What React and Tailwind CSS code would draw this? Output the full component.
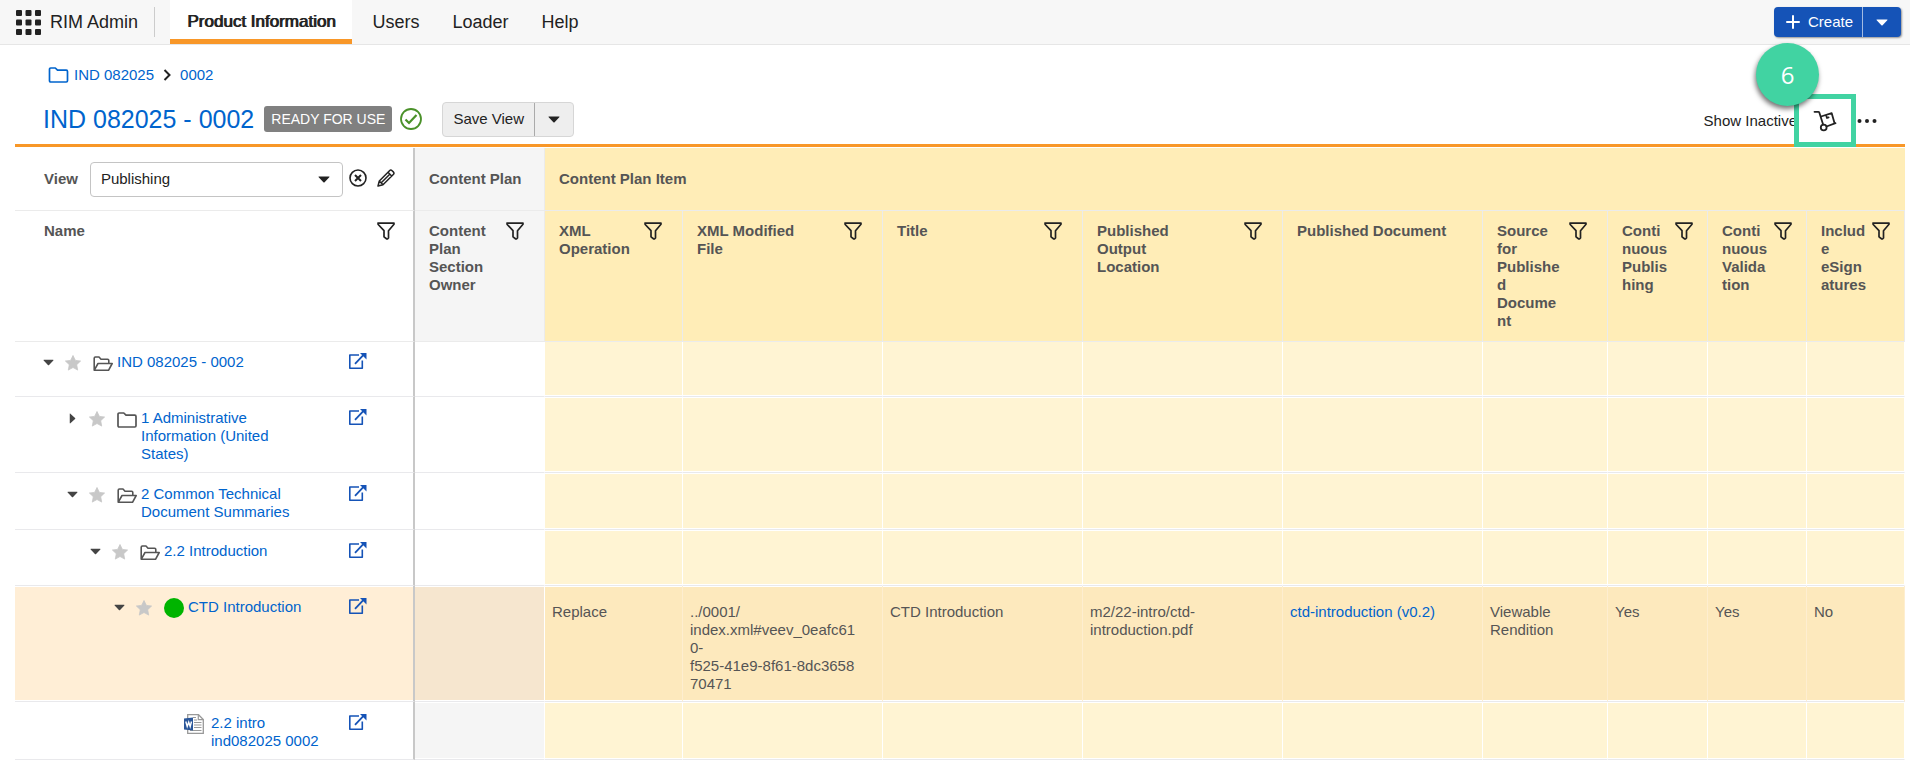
import React, { useState } from 'react';

const Caret = ({ className }) => (
  <svg viewBox="0 0 12 7" className={className} fill="currentColor" aria-hidden="true">
    <path d="M1 .5h10c.5 0 .6.4.3.7L6.6 6.3c-.4.4-.8.4-1.2 0L.7 1.200C.4.9.5.5 1 .5z" />
  </svg>
);

const Filter = () => (
  <svg viewBox="0 0 18 18" className="h-[18px] w-[18px]" fill="none" stroke="currentColor" strokeWidth="1.700" strokeLinejoin="round">
    <path d="M1 1.200h16v1l-5.500 6.500V16l-1 1h-.7L7 14.800V8.700L1.200 2.500z" />
  </svg>
);

const Star = () => (
  <svg viewBox="0 0 16 16" className="h-4 w-4" fill="#c8c8c8" stroke="#c8c8c8" strokeWidth=".8" strokeLinejoin="round">
    <path d="M8 .5l2.400 4.900 5.200.6-3.900 3.700 1 5.400L8 12.500l-4.700 2.600 1-5.400L.4 6l5.200-.6z" />
  </svg>
);

const FolderClosed = ({ className }) => (
  <svg viewBox="0 0 20 16" className={className} fill="none" stroke="currentColor" strokeWidth="1.700" strokeLinejoin="round">
    <path d="M1 13.800V2.200Q1 1 2.200 1h4.600L9 3.200h8.800q1.200 0 1.200 1.200v9.400q0 1.200-1.200 1.200H2.200Q1 15 1 13.800z" />
  </svg>
);

const FolderOpen = () => (
  <svg viewBox="0 0 20 16" className="h-4 w-5" fill="none" stroke="currentColor" strokeWidth="1.600" strokeLinejoin="round">
    <path d="M1.200 14V2.200Q1.200 1 2.400 1H6l2 2.200h6.600q1.200 0 1.200 1.200V7M1.200 14.300L5 7.500H19.200l-3.700 6.800H1.200z" />
  </svg>
);

const WordDoc = () => (
  <svg viewBox="0 0 20 20" className="h-5 w-5">
    <path d="M3.700.7h10.800l4.800 4.800v13.800H3.700z" fill="#fff" stroke="#999" strokeWidth="1.300" />
    <path d="M14.300.7v5h5" fill="none" stroke="#999" strokeWidth="1.200" />
    <path d="M10 8.500h7.500M10 11h7.500M10 13.500h7.500M6 16.500h11.500M9 3.500h3M10 6h3" stroke="#999" strokeWidth="1.200" />
    <path d="M0 4.500L9 3.500v13L0 15.500z" fill="#2b579a" />
    <path d="M1.800 7.500L3.200 12.500 4.700 8.200 6.200 12.500 7.500 7.500" fill="none" stroke="#fff" strokeWidth="1.400" />
  </svg>
);

const OpenExternal = () => (
  <svg viewBox="0 0 18 18" className="h-[18px] w-[18px]" fill="none" stroke="#1553b7" strokeWidth="1.600">
    <path d="M10 2H.8v13.300h12.500V7.500" strokeLinejoin="round" />
    <path d="M6 10.800l8.500-9" strokeWidth="1.800" />
    <path d="M11 0h6.500v6.500z" fill="#1553b7" stroke="none" />
  </svg>
);

const HandTruck = () => (
  <svg viewBox="0 0 24 22" className="h-[22px] w-6" fill="none" stroke="#222" strokeWidth="1.800" strokeLinecap="round" strokeLinejoin="round">
    <path d="M1.500 1.800h3.800q.8 0 1 .8l3.800 12M13.500 16.500l9-3.300" />
    <circle cx="10.700" cy="17.500" r="2.900" />
    <path d="M8 6.500l10.700-3.300 2.800 9.800M13 5l1 3 1.600-.6" />
  </svg>
);

const columns = [
  { label: 'XML Operation', filter: true },
  { label: 'XML Modified File', filter: true },
  { label: 'Title', filter: true },
  { label: 'Published Output Location', filter: true },
  { label: 'Published Document', filter: false },
  { label: 'Source for Published Document', filter: true },
  { label: 'Continuous Publishing', filter: true, tight: true },
  { label: 'Continuous Validation', filter: true, tight: true },
  { label: 'Include eSignatures', filter: true, tight: true },
];

const rows = [
  { name: 'IND 082025 - 0002', indent: 'pl-[28px]', arrow: 'down', icon: 'open', height: 'h-[55px]', first: true },
  { name: '1 Administrative Information (United States)', indent: 'pl-[52px]', arrow: 'right', icon: 'closed', height: 'h-[76px]' },
  { name: '2 Common Technical Document Summaries', indent: 'pl-[52px]', arrow: 'down', icon: 'open', height: 'h-[57px]' },
  { name: '2.2 Introduction', indent: 'pl-[75px]', arrow: 'down', icon: 'open', height: 'h-[56px]' },
  {
    name: 'CTD Introduction',
    indent: 'pl-[99px]',
    arrow: 'down',
    icon: 'dot',
    height: 'h-[116px]',
    selected: true,
    values: [
      'Replace',
      '../0001/\nindex.xml#veev_0eafc61\n0-\nf525-41e9-8f61-8dc3658\n70471',
      'CTD Introduction',
      'm2/22-intro/ctd-introduction.pdf',
      'ctd-introduction (v0.2)',
      'Viewable Rendition',
      'Yes',
      'Yes',
      'No',
    ],
  },
  { name: '2.2 intro ind082025 0002', indent: 'pl-[169px]', icon: 'word', height: 'h-[58px]', muted: true },
];

const tabs = ['Users', 'Loader', 'Help'];

function RowIcon({ type }) {
  switch (type) {
    case 'open':
      return <FolderOpen />;
    case 'closed':
      return <FolderClosed className="h-4 w-5" />;
    case 'dot':
      return <span className="block h-5 w-5 rounded-full bg-[#00b400]" />;
    default:
      return <WordDoc />;
  }
}

function TopBar() {
  return (
    <header className="flex h-[45px] items-stretch border-b border-[#e6e6e6] bg-[#f7f7f7] pr-[9px] pl-4 text-lg text-[#222]">
      <button className="self-center" aria-label="Applications">
        <svg viewBox="0 0 25 25" className="h-[25px] w-[25px]" fill="#222">
          {[0, 9.5, 19].map((y) =>
            [0, 9.5, 19].map((x) => <rect key={`${x}-${y}`} x={x} y={y} width="6" height="6" rx="1" />)
          )}
        </svg>
      </button>
      <span className="self-center pl-[9px]">RIM Admin</span>
      <span className="mr-[15px] ml-4 h-[30px] w-px self-center bg-[#ccc]" />
      <nav className="flex">
        <a href="#product" className="flex items-center border-b-[5px] border-[#f89728] bg-white px-[17px] pt-[5px] text-[17px] [text-shadow:1px_0_0_#222]">
          Product Information
        </a>
        {tabs.map((tab) => (
          <a key={tab} href={`#${tab.toLowerCase()}`} className="flex items-center pr-[13px] pl-5">
            {tab}
          </a>
        ))}
      </nav>
      <div className="ml-auto flex h-[30px] self-center rounded bg-[#1553b7] text-[15px] text-white shadow-[1px_1px_2px_rgba(0,0,0,0.4)]">
        <button className="flex items-center gap-2 border-r border-[#a3bbe2] pr-[9px] pl-3">
          <svg viewBox="0 0 14 14" className="h-[14px] w-[14px]" stroke="currentColor" strokeWidth="2" strokeLinecap="round">
            <path d="M7 1v12M1 7h12" />
          </svg>
          Create
        </button>
        <button className="flex w-[38px] items-center justify-center" aria-label="More create options">
          <Caret className="h-[7px] w-3" />
        </button>
      </div>
    </header>
  );
}

function PageHeader() {
  return (
    <div className="relative mr-[5px] mb-px ml-[15px] h-[102px] border-b-[3px] border-[#f89728]">
      <nav className="flex items-center pt-[21px] pl-[33px] text-[#0064cd]">
        <a href="#application" className="flex items-center gap-[5px]">
          <FolderClosed className="h-4 w-[21px]" />
          IND 082025
        </a>
        <svg viewBox="0 0 8 12" className="mx-[9px] h-3 w-2" fill="none" stroke="#222" strokeWidth="2">
          <path d="M1.500 1l5 5-5 5" />
        </svg>
        <a href="#submission">0002</a>
      </nav>
      <div className="flex items-center pt-[17px] pl-7">
        <h1 className="text-[25px] leading-9 text-[#0064cd]">IND 082025 - 0002</h1>
        <span className="ml-[10px] h-[26px] rounded-[3px] bg-[#808080] px-[7px] text-sm leading-[26px] text-white">READY FOR USE</span>
        <svg viewBox="0 0 22 22" className="ml-2 h-[22px] w-[22px]" fill="none" stroke="#4a9129">
          <circle cx="11" cy="11" r="10" strokeWidth="1.800" />
          <path d="M5.500 11.500l3.500 3.500 7.500-8" strokeWidth="2.200" />
        </svg>
        <div className="ml-5 flex h-[35px] rounded border border-[#d6d6d6] bg-[#eee] text-[#222]">
          <button className="border-r border-[#aaa] px-[10px]">Save View</button>
          <button className="flex w-[38px] items-center justify-center" aria-label="More view options">
            <Caret className="h-[7px] w-3" />
          </button>
        </div>
        <button className="mr-[108px] ml-auto pt-[3px] text-[#222]">Show Inactive</button>
      </div>
      <button className="absolute right-7 bottom-[13px]" aria-label="More actions">
        <svg viewBox="0 0 20 20" className="h-5 w-5" fill="#222">
          <circle cx="2.500" cy="10" r="2" />
          <circle cx="10" cy="10" r="2" />
          <circle cx="17.500" cy="10" r="2" />
        </svg>
      </button>
      <button className="absolute right-[49px] -bottom-[3px] flex h-[53px] w-[62px] items-center justify-center border-5 border-[#41d3a2] bg-white" aria-label="Open cart">
        <HandTruck />
      </button>
      <div className="absolute -top-[2px] right-[86px] flex h-[63px] w-[63px] items-center justify-center rounded-full bg-[#41d3a2] font-['Open_Sans',sans-serif] text-2xl text-white shadow-[-1px_3px_5px_rgba(0,0,0,0.55)]">
        6
      </div>
    </div>
  );
}

function ViewPicker() {
  const [view, setView] = useState('Publishing');
  return (
    <div className="flex items-center pl-[29px]">
      <label htmlFor="view" className="mr-3">View</label>
      <div className="relative w-[253px]">
        <select
          id="view"
          value={view}
          onChange={(e) => setView(e.target.value)}
          className="h-[35px] w-full appearance-none rounded-sm border border-[#c4c4c4] bg-white pl-[10px] font-normal text-[#222]"
        >
          <option>Publishing</option>
        </select>
        <Caret className="pointer-events-none absolute top-[14px] right-[13px] h-[7px] w-3 text-[#222]" />
      </div>
      <button className="ml-[6px] pb-[3px]" aria-label="Clear view">
        <svg viewBox="0 0 18 18" className="h-[18px] w-[18px]" fill="none" stroke="#222" strokeWidth="1.600">
          <circle cx="9" cy="9" r="8" />
          <path d="M6 6l6 6M12 6l-6 6" strokeWidth="2" />
        </svg>
      </button>
      <button className="ml-[10px] pb-[3px]" aria-label="Edit view">
        <svg viewBox="0 0 18 18" className="h-[18px] w-[18px]" fill="none" stroke="#222" strokeWidth="1.500" strokeLinejoin="round">
          <path d="M1 17l1.300-5L12.500 1.700q1.300-1.300 2.600 0l1.200 1.200q1.300 1.300 0 2.600L6 15.700zM2.300 12L6 15.700M11 3.300l3.700 3.700M4.500 13.500l8-8" />
        </svg>
      </button>
    </div>
  );
}

function ColumnHeader({ label, filter, tight }) {
  return (
    <div className={`flex items-start justify-between gap-[6px] pt-[11px] pl-[14px] ${tight ? 'pr-[14px]' : 'pr-5'}`}>
      <span className={`min-w-0 wrap-break-word ${filter ? 'max-w-[110px]' : 'max-w-none'}`}>{label}</span>
      {filter && (
        <button className="shrink-0 text-[#222]" aria-label={`Filter ${label}`}>
          <Filter />
        </button>
      )}
    </div>
  );
}

function TreeRow({ row }) {
  const [starred, setStarred] = useState(false);
  const rowBorder = 'border-b border-[#e9e9ec] p-0 align-top';
  const lines = row.first ? 'shadow-[inset_0_-1px_#fff]' : 'shadow-[inset_0_1px_#fff,inset_0_-1px_#fff]';
  const nameBg = row.selected ? 'bg-[#ffeed6]' : 'bg-white';
  const planBg = row.selected ? 'bg-[#f6e6cf]' : row.muted ? 'bg-[#f5f5f5]' : 'bg-white';
  const cellBg = row.selected ? 'bg-[#fde9bd] border-r-[#feeed0]' : 'bg-[#fff4d3] border-r-white';

  return (
    <tr className={row.height}>
      <td className={`${rowBorder} ${lines} ${nameBg} border-r-2 border-r-[#c8c8c8]`}>
        <div className={`flex items-start ${row.first ? 'pt-[11px]' : 'pt-3'} pb-2 ${row.indent}`}>
          {row.arrow && (
            <>
              <button className="flex h-[18px] w-[11px] items-center justify-center text-[#444]" aria-label="Toggle">
                <Caret className={`h-[7px] w-[11px] ${row.arrow === 'right' ? '-rotate-90' : ''}`} />
              </button>
              <button
                className="ml-[11px] pt-[2px]"
                aria-label="Favorite"
                aria-pressed={starred}
                onClick={() => setStarred(!starred)}
              >
                <Star />
              </button>
            </>
          )}
          <span className={`text-[#555] ${row.arrow ? 'ml-3' : ''} ${row.arrow && row.icon !== 'dot' ? 'pt-[3px]' : ''}`}>
            <RowIcon type={row.icon} />
          </span>
          <a href="#item" className={`min-w-0 flex-1 text-[#0064cd] ${row.arrow ? 'ml-1' : 'ml-[7px]'}`}>
            {row.name}
          </a>
          <button className={`mr-[46px] shrink-0 ${row.arrow ? 'ml-[31px]' : 'ml-6'}`} aria-label={`Open ${row.name} in a new window`}>
            <OpenExternal />
          </button>
        </div>
      </td>
      <td className={`${rowBorder} ${lines} ${planBg} border-r border-r-white`} />
      {columns.map((col, i) => (
        <td key={col.label} className={`${rowBorder} ${lines} ${cellBg} border-r`}>
          {row.values && (
            <div className="pt-[17px] pr-6 pb-2 pl-[7px] wrap-break-word whitespace-pre-line text-[#555]">
              {i === 4 ? <a href="#document" className="text-[#0064cd]">{row.values[i]}</a> : row.values[i]}
            </div>
          )}
        </td>
      ))}
    </tr>
  );
}

export default function App() {
  return (
    <div className="bg-white font-['Liberation_Sans',Arial,sans-serif] text-[15px] leading-[18px] text-[#222]">
      <TopBar />
      <PageHeader />
      <div className="mr-[5px] ml-[15px]">
        <table className="w-full table-fixed border-separate border-spacing-0 text-left">
          <colgroup>
            <col className="w-[400px]" />
            <col className="w-[130px]" />
            <col className="w-[138px]" />
            <col className="w-[200px]" />
            <col className="w-[200px]" />
            <col className="w-[200px]" />
            <col className="w-[200px]" />
            <col className="w-[125px]" />
            <col className="w-[100px]" />
            <col className="w-[99px]" />
            <col className="w-[98px]" />
          </colgroup>
          <thead className="text-[#555]">
            <tr className="h-[63px]">
              <th className="border-r-2 border-b border-[#ebebeb] border-r-[#c8c8c8] p-0">
                <ViewPicker />
              </th>
              <th className="border-r border-b border-[#ebebeb] bg-[#f5f5f5] p-0 pl-[14px]">Content Plan</th>
              <th colSpan={9} className="border-b border-[#ebebeb] bg-[#ffedb7] p-0 pl-[14px]">Content Plan Item</th>
            </tr>
            <tr className="h-[131px]">
              <th className="border-r-2 border-b border-[#ebebeb] border-r-[#c8c8c8] p-0 align-top">
                <div className="flex justify-between pt-[11px] pr-[18px] pl-[29px]">
                  Name
                  <button className="text-[#222]" aria-label="Filter Name">
                    <Filter />
                  </button>
                </div>
              </th>
              <th className="border-r border-b border-[#ebebeb] bg-[#f5f5f5] p-0 align-top">
                <ColumnHeader label="Content Plan Section Owner" filter />
              </th>
              {columns.map((col) => (
                <th key={col.label} className="border-r border-b border-[#ebebeb] bg-[#ffedb7] p-0 align-top">
                  <ColumnHeader {...col} />
                </th>
              ))}
            </tr>
          </thead>
          <tbody>
            {rows.map((row) => (
              <TreeRow key={row.name} row={row} />
            ))}
          </tbody>
        </table>
      </div>
    </div>
  );
}
